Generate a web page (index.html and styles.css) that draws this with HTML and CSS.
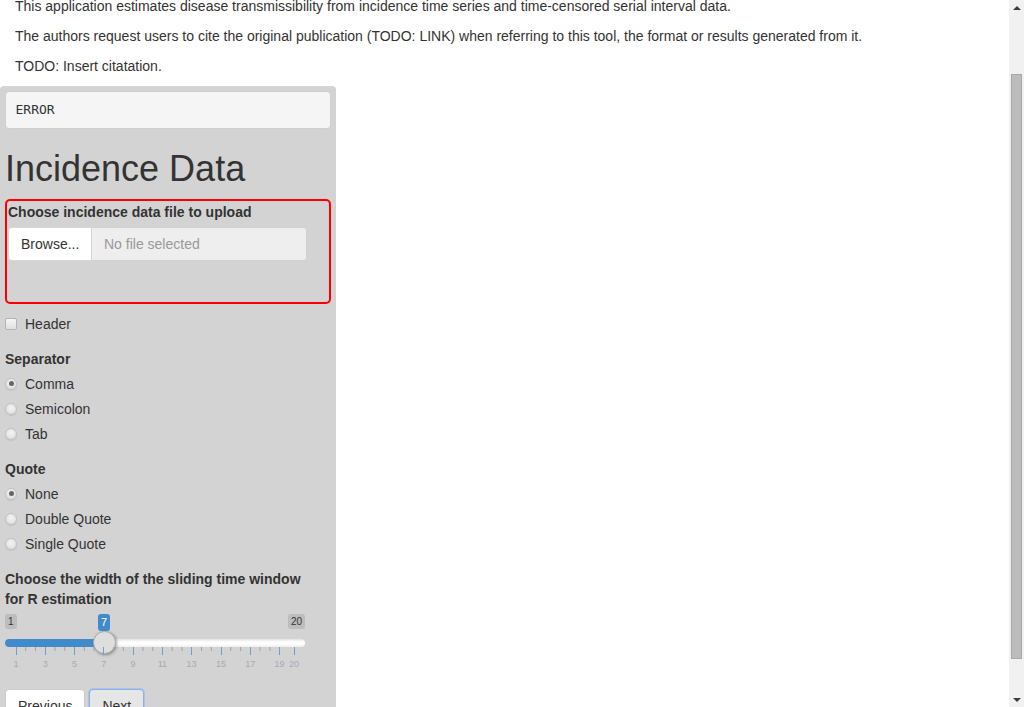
FILE: index.html
```html
<!DOCTYPE html>
<html>
<head>
<meta charset="utf-8">
<link rel="stylesheet" href="styles.css">
</head>
<body>
<div class="app">
  <div class="page">
    <div class="intro">
      <p>This application estimates disease transmissibility from incidence time series and time-censored serial interval data.</p>
      <p>The authors request users to cite the original publication (TODO: LINK) when referring to this tool, the format or results generated from it.</p>
      <p>TODO: Insert citatation.</p>
    </div>
    <div class="sidebar">
      <pre class="error">ERROR</pre>
      <h1 class="title">Incidence Data</h1>
      <div class="upload">
        <div class="ctl-label">Choose incidence data file to upload</div>
        <div class="file-group">
          <span class="browse">Browse...</span>
          <span class="file-name">No file selected</span>
        </div>
        <div class="progress-space"></div>
      </div>
      <div class="check-row"><span class="checkbox"></span><span>Header</span></div>
      <div class="group">
        <div class="ctl-label">Separator</div>
        <div class="options">
          <div class="opt"><span class="radio checked"></span><span>Comma</span></div>
          <div class="opt"><span class="radio"></span><span>Semicolon</span></div>
          <div class="opt"><span class="radio"></span><span>Tab</span></div>
        </div>
      </div>
      <div class="group">
        <div class="ctl-label">Quote</div>
        <div class="options">
          <div class="opt"><span class="radio checked"></span><span>None</span></div>
          <div class="opt"><span class="radio"></span><span>Double Quote</span></div>
          <div class="opt"><span class="radio"></span><span>Single Quote</span></div>
        </div>
      </div>
      <div class="group slider-group">
        <div class="ctl-label wide">Choose the width of the sliding time window for R estimation</div>
        <div class="slider">
          <span class="irs-min">1</span>
          <span class="irs-max">20</span>
          <span class="irs-line"></span>
          <span class="irs-bar"></span>
          <span class="irs-single">7</span>
          <span class="irs-handle"></span>
          <svg class="irs-grid" width="300" height="10" viewBox="0 0 300 10">
            <g stroke="#a3a3a3" stroke-width="1">
              <line x1="20.75" y1="0" x2="20.75" y2="4"/><line x1="30.5" y1="0" x2="30.5" y2="4"/>
              <line x1="50" y1="0" x2="50" y2="4"/><line x1="59.8" y1="0" x2="59.8" y2="4"/>
              <line x1="79.3" y1="0" x2="79.3" y2="4"/><line x1="89" y1="0" x2="89" y2="4"/>
              <line x1="108.6" y1="0" x2="108.6" y2="4"/><line x1="118.3" y1="0" x2="118.3" y2="4"/>
              <line x1="137.9" y1="0" x2="137.9" y2="4"/><line x1="147.7" y1="0" x2="147.7" y2="4"/>
              <line x1="167.2" y1="0" x2="167.2" y2="4"/><line x1="177" y1="0" x2="177" y2="4"/>
              <line x1="196.5" y1="0" x2="196.5" y2="4"/><line x1="206.3" y1="0" x2="206.3" y2="4"/>
              <line x1="225.8" y1="0" x2="225.8" y2="4"/><line x1="235.6" y1="0" x2="235.6" y2="4"/>
              <line x1="255.1" y1="0" x2="255.1" y2="4"/><line x1="264.9" y1="0" x2="264.9" y2="4"/>
            </g>
            <g stroke="#6f9fd1" stroke-width="1">
              <line x1="11.5" y1="0" x2="11.5" y2="8"/><line x1="40.5" y1="0" x2="40.5" y2="8"/>
              <line x1="69.5" y1="0" x2="69.5" y2="8"/><line x1="98.5" y1="0" x2="98.5" y2="8"/>
              <line x1="128.5" y1="0" x2="128.5" y2="8"/><line x1="157.5" y1="0" x2="157.5" y2="8"/>
              <line x1="186.5" y1="0" x2="186.5" y2="8"/><line x1="216.5" y1="0" x2="216.5" y2="8"/>
              <line x1="245.5" y1="0" x2="245.5" y2="8"/><line x1="274.5" y1="0" x2="274.5" y2="8"/>
              <line x1="289.5" y1="0" x2="289.5" y2="8"/>
            </g>
          </svg>
          <div class="grid-labels">
            <span class="gl" style="left:11px">1</span>
            <span class="gl" style="left:40.3px">3</span>
            <span class="gl" style="left:69.5px">5</span>
            <span class="gl" style="left:98.8px">7</span>
            <span class="gl" style="left:128.1px">9</span>
            <span class="gl" style="left:157.4px">11</span>
            <span class="gl" style="left:186.6px">13</span>
            <span class="gl" style="left:215.9px">15</span>
            <span class="gl" style="left:245.2px">17</span>
            <span class="gl" style="left:274.4px">19</span>
            <span class="gl" style="left:289px">20</span>
          </div>
        </div>
      </div>
      <div class="buttons">
        <button class="btn">Previous</button>
        <button class="btn focused">Next</button>
      </div>
    </div>
  </div>
  <div class="scrollbar">
    <div class="arrow-box"><span class="tri tri-up"></span></div>
    <div class="track"><div class="thumb"></div></div>
    <div class="arrow-box"><span class="tri tri-down"></span></div>
  </div>
</div>
</body>
</html>
```
FILE: styles.css
```css
html, body {
  margin: 0;
  padding: 0;
  height: 100%;
  overflow: hidden;
  background: #fff;
}
body {
  font-family: "Liberation Sans", Arial, sans-serif;
  font-size: 14px;
  line-height: 20px;
  color: #333;
}
.app {
  display: flex;
  width: 1024px;
  height: 707px;
}
.page {
  flex: 1 1 auto;
  min-width: 0;
  overflow: hidden;
  display: flex;
  flex-direction: column;
  align-items: flex-start;
}
.intro {
  padding: 0 15px;
  margin-top: -4px;
}
.intro p {
  margin: 0 0 10px;
}
.sidebar {
  width: 326px;
  padding: 5px;
  background: #d3d3d3;
  border-radius: 4px 4px 0 0;
  flex: 1;
}
.error {
  margin: 0 0 10px;
  padding: 9px 9.5px;
  font-family: "DejaVu Sans Mono", "Liberation Mono", monospace;
  font-size: 13px;
  line-height: 18px;
  color: #333;
  background: #f5f5f5;
  border: 1px solid #cfcfcf;
  border-radius: 4px;
}
.title {
  margin: 20px 0 10px;
  font-size: 36px;
  font-weight: 500;
  line-height: 1.1;
  color: #333;
}
.ctl-label {
  font-weight: bold;
  margin-bottom: 5px;
}
.ctl-label.wide {
  width: 300px;
}
.upload {
  border: 2px solid #f00;
  border-radius: 5px;
  padding: 1px;
  margin-bottom: 10px;
}
.file-group {
  display: flex;
  width: 299px;
  height: 34px;
}
.browse {
  box-sizing: border-box;
  width: 84px;
  padding: 6px 12px;
  background: #fff;
  border: 1px solid #d6d6d6;
  border-radius: 4px 0 0 4px;
  color: #333;
}
.file-name {
  flex: 1;
  box-sizing: border-box;
  padding: 6px 12px;
  background: #eee;
  border: 1px solid #d0d0d0;
  border-left: none;
  border-radius: 0 4px 4px 0;
  color: #999;
}
.progress-space {
  height: 40px;
}
.check-row {
  display: flex;
  align-items: center;
  gap: 8px;
  height: 20px;
  margin-bottom: 15px;
}
.checkbox {
  box-sizing: border-box;
  width: 12px;
  height: 12px;
  border: 1px solid #b3b3b3;
  border-radius: 2px;
  background: linear-gradient(#f6f6f6, #e0e0e0);
}
.group {
  margin-bottom: 15px;
}
.options {
  display: flex;
  flex-direction: column;
  gap: 5px;
}
.opt {
  display: flex;
  align-items: center;
  gap: 8px;
  height: 20px;
}
.radio {
  box-sizing: border-box;
  width: 12px;
  height: 12px;
  border-radius: 50%;
  border: 1px solid #c2c2c2;
  background: radial-gradient(circle at 50% 40%, #f4f4f4 0%, #e4e4e4 60%, #d2d2d2 100%);
  box-shadow: 0 1px 1px rgba(0, 0, 0, 0.08);
  display: flex;
  align-items: center;
  justify-content: center;
}
.radio.checked::after {
  content: "";
  width: 5px;
  height: 5px;
  border-radius: 50%;
  background: #666;
}
.slider-group {
  margin-bottom: 20px;
}
.slider {
  position: relative;
  width: 300px;
  height: 55px;
}
.irs-min, .irs-max {
  position: absolute;
  top: 0;
  padding: 1px 3px;
  font-size: 10px;
  line-height: 13px;
  background: rgba(0, 0, 0, 0.1);
  border-radius: 3px;
  color: #333;
}
.irs-min { left: 0; }
.irs-max { right: 0; }
.irs-single {
  position: absolute;
  top: 0;
  left: 93px;
  padding: 1px 3px;
  font-size: 11px;
  line-height: 15px;
  background: #428bca;
  color: #fff;
  border-radius: 3px;
}
.irs-line {
  position: absolute;
  top: 25px;
  left: 0;
  right: 0;
  height: 8px;
  border-radius: 8px;
  background: linear-gradient(#e2e2e2 0%, #fdfdfd 35%, #fff 65%, #ececec 100%);
}
.irs-bar {
  position: absolute;
  top: 25px;
  left: 0;
  width: 99px;
  height: 8px;
  border-radius: 8px 0 0 8px;
  background: #428bca;
}
.irs-handle {
  position: absolute;
  top: 17px;
  left: 88px;
  box-sizing: border-box;
  width: 23px;
  height: 23px;
  border-radius: 50%;
  border: 1px solid #aaa;
  background: #dedede;
  box-shadow: 1px 1px 3px rgba(0, 0, 0, 0.35);
}
.irs-grid {
  position: absolute;
  top: 33px;
  left: 0;
}
.grid-labels {
  position: absolute;
  top: 44px;
  left: 0;
  width: 300px;
  height: 12px;
}
.gl {
  position: absolute;
  top: 0;
  transform: translateX(-50%);
  font-size: 9px;
  line-height: 12px;
  color: #a3abb3;
}
.buttons {
  display: flex;
  gap: 4px;
}
.btn {
  font-family: "Liberation Sans", Arial, sans-serif;
  font-size: 14px;
  line-height: 20px;
  padding: 6px 12px;
  color: #333;
  background: #fff;
  border: 1px solid #ccc;
  border-radius: 4px;
}
.btn.focused {
  background: #e6e6e6;
  border-color: #8fb0e3;
  box-shadow: 0 0 0 1px #a9c3ec;
}
.scrollbar {
  flex: 0 0 15px;
  width: 15px;
  height: 707px;
  background: #f1f1f1;
  display: flex;
  flex-direction: column;
}
.arrow-box {
  flex: 0 0 15px;
  height: 15px;
  display: flex;
  align-items: center;
  justify-content: center;
}
.tri {
  display: block;
  width: 0;
  height: 0;
  border-left: 4px solid transparent;
  border-right: 4px solid transparent;
}
.tri-up {
  border-bottom: 4px solid #3c3c3c;
  margin-top: 1px;
}
.tri-down {
  border-top: 4px solid #3c3c3c;
  margin-top: 1px;
}
.track {
  flex: 1 1 auto;
  min-height: 0;
  padding: 59px 2px 0;
}
.thumb {
  height: 583px;
  background: #bcbcbc;
  border: 1px solid #a8a8a8;
}
```
